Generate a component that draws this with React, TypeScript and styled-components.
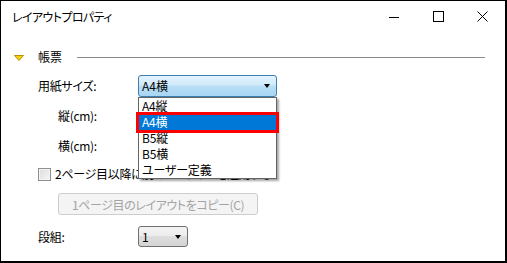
import React from "react";
import styled, { createGlobalStyle } from "styled-components";

const Global = createGlobalStyle`
  html, body { margin: 0; padding: 0; background: #fff; }
  body {
    font-family: "Noto Sans CJK JP", "Noto Sans", sans-serif;
    font-size: 12px;
    color: #000;
    font-feature-settings: "palt";
  }
`;

const Window = styled.div`
  width: 507px;
  height: 263px;
  box-sizing: border-box;
  border-style: solid;
  border-color: #000;
  border-width: 1px 2px 2px 1px;
  background: #fff;
  display: flex;
  flex-direction: column;
`;

const TitleBar = styled.div`
  height: 31px;
  display: flex;
  align-items: center;
  padding-left: 11px;
`;

const Title = styled.div`
  flex: 1;
  font-size: 12px;
  line-height: 16px;
  letter-spacing: -0.6px;
  color: #000;
`;

const Controls = styled.div`
  display: flex;
  height: 100%;
  padding-right: 1px;
`;

const CtrlButton = styled.div`
  width: 44px;
  height: 100%;
  display: flex;
  align-items: center;
  justify-content: center;
`;

const Content = styled.div`
  display: flex;
  flex-direction: column;
  padding: 18px 0 0 13px;
`;

const SectionHeader = styled.div`
  display: flex;
  align-items: center;
  height: 14px;
`;

const Triangle = styled.svg`
  width: 10px;
  height: 6px;
  margin-right: 14px;
  margin-top: 2px;
`;

const SectionTitle = styled.span`
  font-size: 12px;
  line-height: 14px;
  margin-right: 15px;
`;

const Rule = styled.div`
  width: 408px;
  height: 1px;
  background: #8a8a8a;
  margin-top: 1px;
`;

const Row = styled.div<{ $h: number; $mt: number; $indent?: number }>`
  display: flex;
  align-items: center;
  height: ${(p) => p.$h}px;
  margin-top: ${(p) => p.$mt}px;
  padding-left: ${(p) => 24 + (p.$indent || 0)}px;
  position: relative;
`;

const Label = styled.div<{ $w: number }>`
  width: ${(p) => p.$w}px;
  font-size: 12px;
  line-height: 16px;
  letter-spacing: -0.3px;
`;

const ComboWrap = styled.div`
  position: relative;
`;

const Combo = styled.div<{ $w: number; $active?: boolean }>`
  box-sizing: border-box;
  width: ${(p) => p.$w}px;
  height: ${(p) => (p.$active ? 22 : 21)}px;
  border: 1px solid ${(p) => (p.$active ? "#3c7fb1" : "#707070")};
  border-radius: 3px;
  background: ${(p) =>
    p.$active
      ? "linear-gradient(#e4f3fc 0%, #d0eafa 45%, #b9def6 50%, #a8d6f3 100%)"
      : "linear-gradient(#f4f4f4 0%, #ececec 45%, #dedede 50%, #d4d4d4 100%)"};
  display: flex;
  align-items: center;
  padding: 0 6px 0 3px;
  font-size: 12px;
  line-height: 16px;
`;

const ComboText = styled.span`
  flex: 1;
`;

const Arrow = styled.div`
  width: 0;
  height: 0;
  border-left: 3.5px solid transparent;
  border-right: 3.5px solid transparent;
  border-top: 4px solid #000;
`;

const ListBox = styled.div`
  position: absolute;
  left: 0;
  top: 22px;
  width: 139px;
  box-sizing: border-box;
  border: 1px solid #646464;
  background: #fff;
  box-shadow: 2px 2px 2px rgba(0, 0, 0, 0.35);
  z-index: 10;
`;

const ListItem = styled.div<{ $sel?: boolean }>`
  position: relative;
  height: 16px;
  line-height: 16px;
  padding-left: 3px;
  font-size: 12px;
  letter-spacing: -0.2px;
  background: ${(p) => (p.$sel ? "#0078d7" : "transparent")};
  color: ${(p) => (p.$sel ? "#fff" : "#000")};
`;

const Highlight = styled.div`
  position: absolute;
  left: -3px;
  right: -3px;
  top: -2px;
  bottom: -3px;
  border: 3px solid #ff0000;
  pointer-events: none;
`;

const CheckRow = styled.div`
  display: flex;
  align-items: center;
  height: 16px;
  margin-top: 12px;
  padding-left: 24px;
`;

const CheckBox = styled.div`
  width: 13px;
  height: 13px;
  box-sizing: border-box;
  border: 1px solid #8e8f8f;
  background: linear-gradient(135deg, #dcdcdc, #f6f6f6);
  box-shadow: inset 0 0 0 1px #f4f4f4;
  margin-right: 4px;
`;

const CheckLabel = styled.span`
  font-size: 12px;
  line-height: 16px;
  letter-spacing: -0.3px;
`;

const DisabledButton = styled.div`
  box-sizing: border-box;
  width: 200px;
  height: 22px;
  margin-top: 11px;
  margin-left: 44px;
  border: 1px solid #cdcdcd;
  border-radius: 3px;
  background: #f4f4f4;
  color: #a3a3a3;
  display: flex;
  align-items: center;
  justify-content: center;
  font-size: 12px;
  letter-spacing: -0.4px;
`;

export default function App() {
  return (
    <>
      <Global />
      <Window>
        <TitleBar>
          <Title>レイアウトプロパティ</Title>
          <Controls>
            <CtrlButton>
              <svg width="10" height="10" viewBox="0 0 10 10">
                <line x1="0" y1="5.5" x2="10" y2="5.5" stroke="#000" strokeWidth="1" />
              </svg>
            </CtrlButton>
            <CtrlButton>
              <svg width="11" height="11" viewBox="0 0 11 11">
                <rect x="0.5" y="0.5" width="10" height="10" fill="none" stroke="#000" strokeWidth="1" />
              </svg>
            </CtrlButton>
            <CtrlButton>
              <svg width="11" height="11" viewBox="0 0 11 11">
                <path d="M0.5 0.5 L10.5 10.5 M10.5 0.5 L0.5 10.5" stroke="#000" strokeWidth="1" fill="none" />
              </svg>
            </CtrlButton>
          </Controls>
        </TitleBar>
        <Content>
          <SectionHeader>
            <Triangle viewBox="0 0 10 6">
              <path d="M0.5 0.5 L9.5 0.5 L5 5.5 Z" fill="#f3cf0c" stroke="#b79100" strokeWidth="1" />
            </Triangle>
            <SectionTitle>帳票</SectionTitle>
            <Rule />
          </SectionHeader>

          <Row $h={22} $mt={11}>
            <Label $w={100}>用紙サイズ:</Label>
            <ComboWrap>
              <Combo $w={139} $active>
                <ComboText>A4横</ComboText>
                <Arrow />
              </Combo>
              <ListBox>
                <ListItem>A4縦</ListItem>
                <ListItem $sel>
                  A4横
                  <Highlight />
                </ListItem>
                <ListItem>B5縦</ListItem>
                <ListItem>B5横</ListItem>
                <ListItem>ユーザー定義</ListItem>
              </ListBox>
            </ComboWrap>
          </Row>

          <Row $h={16} $mt={11} $indent={20}>
            <Label $w={80}>縦(cm):</Label>
          </Row>
          <Row $h={16} $mt={14} $indent={20}>
            <Label $w={80}>横(cm):</Label>
          </Row>

          <CheckRow>
            <CheckBox />
            <CheckLabel>2ページ目以降に別のレイアウトを適用する</CheckLabel>
          </CheckRow>

          <DisabledButton>1ページ目のレイアウトをコピー(C)</DisabledButton>

          <Row $h={21} $mt={11}>
            <Label $w={100}>段組:</Label>
            <Combo $w={50}>
              <ComboText>1</ComboText>
              <Arrow />
            </Combo>
          </Row>
        </Content>
      </Window>
    </>
  );
}
